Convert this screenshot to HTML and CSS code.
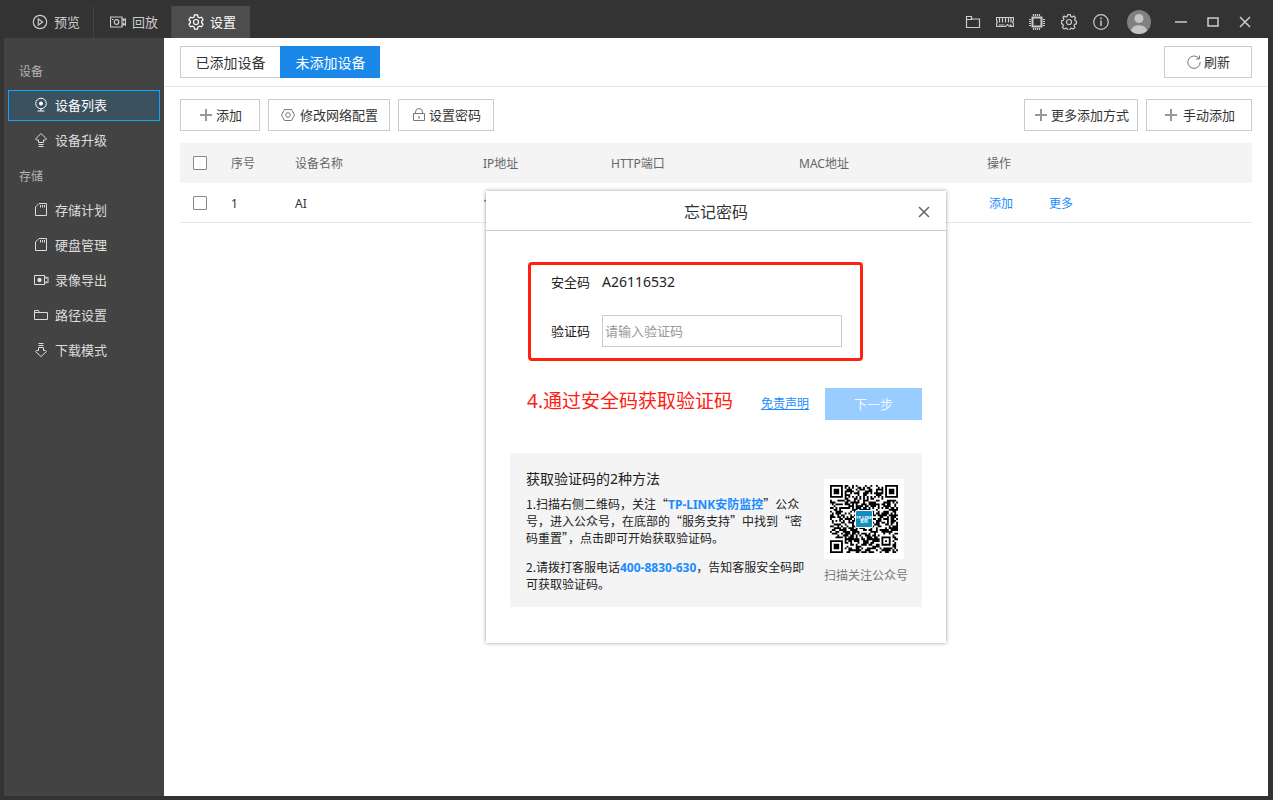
FILE: index.html
```html
<!DOCTYPE html>
<html lang="zh-CN">
  <head>
    <meta charset="UTF-8" />
    <meta name="viewport" content="width=device-width, initial-scale=1.0" />
    <title>设备列表</title>
    <link rel="stylesheet" href="styles.css">
  </head>
  <body>
    <header class="titlebar">
      <nav class="main-tabs">
        <a class="main-tab" href="#">
          <svg class="icon" viewBox="0 0 16 16"><circle cx="8" cy="8" r="6.7"/><path d="M6.3 5v6l4.3-3z"/></svg>
          预览
        </a>
        <a class="main-tab" href="#">
          <svg class="icon" viewBox="0 0 16 16"><path d="M.5 3h11.500v10H.5zM12 5h1.500v1.500L15.500 5v6l-2-1.500V11H12"/><circle cx="6.500" cy="8" r="2.300"/><path d="M2 5.500h1.500"/></svg>
          回放
        </a>
        <a class="main-tab active" href="#">
          <svg class="icon" viewBox="0 0 16 16"><path d="M6.500.8h3L10 3l1.600.9 2-.7 1.500 2.600-1.500 1.400v1.600l1.500 1.400-1.500 2.600-2-.7-1.600.9-.5 2.200h-3L6 13l-1.600-.9-2 .7L.9 10.200l1.500-1.400V7.200L.9 5.800l1.500-2.600 2 .7L6 3z"/><circle cx="8" cy="8" r="2.500"/></svg>
          设置
        </a>
      </nav>
      <div class="window-tools">
        <button class="tool" aria-label="文件夹"><svg class="icon" viewBox="0 0 16 16"><path d="M1.500 13.500v-11h5V5h8v8.500zM1.500 5.500h6"/></svg></button>
        <button class="tool" aria-label="内存"><svg class="icon memory" viewBox="0 0 18 16"><path d="M.5 3.500h17v3q-1.500 1.500 0 3v3h-4l-2-2-2 2h-9v-3q1.500-1.500 0-3z"/><path d="M3.500 4v4.500M6.500 4v4.500M9.500 4v4.500M12.500 4v4.500M15 4v4.500M2.500 11h6M14 10.500l1.500 1.500"/></svg></button>
        <button class="tool" aria-label="处理器"><svg class="icon" viewBox="0 0 16 16"><path d="M3.500 3.500h9v9h-9z" stroke-width="2"/><path d="M4.500 0v2M6.500 0v2M8.500 0v2M10.500 0v2M4.500 14v2M6.500 14v2M8.500 14v2M10.500 14v2M0 5.500h2M0 7.500h2M0 9.500h2M0 11.500h2M14 5.500h2M14 7.500h2M14 9.500h2M14 11.500h2"/></svg></button>
        <button class="tool" aria-label="设置"><svg class="icon" viewBox="0 0 16 16"><path d="M6.700.6h2.600l.5 1.900 1.300.5 1.700-1 1.800 1.800-1 1.700.5 1.300 1.300.4v2.600l-1.800.5-.6 1.300 1 1.700-1.800 1.800-1.700-1-1.200.5-.5 1.800H6.700l-.5-1.800-1.300-.5-1.700 1-1.800-1.800 1-1.700-.5-1.300-1.300-.5V6.700l1.800-.4.5-1.300-1-1.700L3.200 2l1.700 1 1.300-.5z"/><circle cx="8" cy="8" r="2.500"/></svg></button>
        <button class="tool" aria-label="关于"><svg class="icon" viewBox="0 0 16 16"><circle cx="8" cy="8" r="7.300"/><path d="M8 6.500v5.500M8 3.500v1.700" stroke-width="1.500"/></svg></button>
        <button class="tool avatar" aria-label="用户">
          <svg viewBox="0 0 24 24"><circle cx="12" cy="12" r="12" fill="#808080"/><circle cx="12" cy="8.500" r="4.500" fill="#c4c4c4"/><path d="M3.800 20.700C5 17 8 15.200 12 15.200s7 1.800 8.200 5.500A12 12 0 0 1 3.800 20.700z" fill="#c4c4c4"/></svg>
        </button>
        <button class="tool" aria-label="最小化"><svg class="icon" viewBox="0 0 16 16"><path d="M2 8h12" stroke-width="1.500"/></svg></button>
        <button class="tool" aria-label="最大化"><svg class="icon" viewBox="0 0 16 16"><path d="M3 4h10v8H3z" stroke-width="1.500"/></svg></button>
        <button class="tool" aria-label="关闭窗口"><svg class="icon" viewBox="0 0 16 16"><path d="M3 3l10 10M13 3L3 13" stroke-width="1.500"/></svg></button>
      </div>
    </header>

    <div class="layout">
      <aside class="sidebar">
        <div class="menu-group">
          <h2>设备</h2>
          <a class="menu-item active" href="#">
            <svg class="icon" viewBox="0 0 16 16"><circle cx="8" cy="6.500" r="5.300"/><circle class="solid" cx="8" cy="6.500" r="2"/><path d="M8 12v2M4.500 14h7"/></svg>
            设备列表
          </a>
          <a class="menu-item" href="#">
            <svg class="icon" viewBox="0 0 16 16"><path d="M8 1.500L2.500 7l1 1h2v2.500h5V8h2l1-1zM5.500 12.500h5M5.500 14.500h5"/></svg>
            设备升级
          </a>
        </div>
        <div class="menu-group">
          <h2>存储</h2>
          <a class="menu-item" href="#">
            <svg class="icon" viewBox="0 0 16 16"><path d="M6 1.500h7.500v12h-11V5zM7.500 3v2.500M9.500 3v2.500M11.500 3v2.500"/></svg>
            存储计划
          </a>
          <a class="menu-item" href="#">
            <svg class="icon" viewBox="0 0 16 16"><path d="M6 1.500h7.500v12h-11V5zM7.500 3v2.500M9.500 3v2.500M11.500 3v2.500"/></svg>
            硬盘管理
          </a>
          <a class="menu-item" href="#">
            <svg class="icon" viewBox="0 0 16 16"><path d="M1.500 3.500h10v9h-10zM12 5h1v1.500L15 5v6l-2-1.500V11h-1"/><circle class="solid" cx="6.500" cy="8" r="2.200"/></svg>
            录像导出
          </a>
          <a class="menu-item" href="#">
            <svg class="icon" viewBox="0 0 16 16"><path d="M1.500 12.500v-9h4l1 2h8v7zM1.500 5.500h6"/></svg>
            路径设置
          </a>
          <a class="menu-item" href="#">
            <svg class="icon" viewBox="0 0 16 16"><path d="M5.500 1.500h5M5.500 3.500h5M5.500 5.500h5v3h2l1 1L8 14.500l-5.500-5 1-1h2z"/></svg>
            下载模式
          </a>
        </div>
      </aside>

      <main class="content">
        <div class="view-bar">
          <div class="view-tabs">
            <button class="view-tab">已添加设备</button>
            <button class="view-tab active">未添加设备</button>
          </div>
          <button class="btn refresh">
            <svg class="icon" viewBox="0 0 16 16"><path d="M13 4.500A6.200 6.200 0 1 0 14.200 8M13.500 1.500v3.500H10"/></svg>刷新
          </button>
        </div>

        <div class="toolbar">
          <button class="btn add"><svg class="icon" viewBox="0 0 16 16"><path class="plus" d="M8 2v12M2 8h12"/></svg>添加</button>
          <button class="btn network"><svg class="icon" viewBox="0 0 16 16"><path d="M4.500 2.500h7L14.500 8l-3 5.500h-7L1.500 8z"/><circle cx="8" cy="8" r="2.300"/></svg>修改网络配置</button>
          <button class="btn password"><svg class="icon" viewBox="0 0 16 16"><path d="M2.500 6.500h11v7h-11zM4.500 6.500V5a3.500 3.500 0 0 1 7 0v1.500M8 9v3"/></svg>设置密码</button>
          <button class="btn more"><svg class="icon" viewBox="0 0 16 16"><path class="plus" d="M8 2v12M2 8h12"/></svg>更多添加方式</button>
          <button class="btn manual"><svg class="icon" viewBox="0 0 16 16"><path class="plus" d="M8 2v12M2 8h12"/></svg>手动添加</button>
        </div>

        <table class="devices">
          <thead>
            <tr>
              <th class="col-check"><input type="checkbox" aria-label="全选"></th>
              <th class="col-index">序号</th>
              <th class="col-wide">设备名称</th>
              <th class="col-ip">IP地址</th>
              <th class="col-wide">HTTP端口</th>
              <th class="col-wide">MAC地址</th>
              <th>操作</th>
            </tr>
          </thead>
          <tbody>
            <tr>
              <td class="col-check"><input type="checkbox" aria-label="选择 AI"></td>
              <td>1</td>
              <td>AI</td>
              <td>1</td>
              <td></td>
              <td></td>
              <td><div class="row-links"><a href="#">添加</a><a href="#">更多</a></div></td>
            </tr>
          </tbody>
        </table>

        <div class="overlay">
          <section class="dialog" role="dialog" aria-labelledby="dialogTitle">
            <header class="dialog-header">
              <h1 id="dialogTitle">忘记密码</h1>
              <button class="dialog-close" aria-label="关闭"><svg class="icon" viewBox="0 0 16 16"><path d="M3 3l10 10M13 3L3 13" stroke-width="1.500"/></svg></button>
            </header>
            <form class="dialog-body">
              <div class="codes">
                <span>安全码</span>
                <output>A26116532</output>
                <label for="verifyCode">验证码</label>
                <input type="text" id="verifyCode" placeholder="请输入验证码">
              </div>
              <div class="actions">
                <p class="step">4.通过安全码获取验证码</p>
                <a class="disclaimer" href="#">免责声明</a>
                <button type="button" class="next">下一步</button>
              </div>
              <div class="help">
                <div class="help-text">
                  <h3>获取验证码的2种方法</h3>
                  <p>1.扫描右侧二维码，关注“<b>TP-LINK安防监控</b>”公众号，进入公众号，在底部的“服务支持”中找到“密码重置”，点击即可开始获取验证码。</p>
                  <p>2.请拨打客服电话<b>400-8830-630</b>，告知客服安全码即可获取验证码。</p>
                </div>
                <div class="help-qr">
                  <svg class="qr" viewBox="0 0 80 80">
                    <path id="qrModules" fill="#000"/>
                    <rect x="31" y="31" width="18" height="18" rx="2" fill="#fff"/>
                    <rect x="32" y="32" width="16" height="16" rx="1" fill="#0f8fc0"/>
                    <text class="qr-brand" x="40" y="40">TP-LINK</text>
                    <text class="qr-brand" x="40" y="44">安防</text>
                  </svg>
                  <span>扫描关注公众号</span>
                </div>
              </div>
            </form>
          </section>
        </div>
      </main>
    </div>

    <script src="script.js"></script>
  </body>
</html>
```
FILE: script.js
```js
const SIZE = 37;
const STEP = 68 / SIZE;
const MARGIN = 6;

// Square ring pattern used by the finder and alignment marks
function ring(x, y, cx, cy, radius) {
  const d = Math.max(Math.abs(x - cx), Math.abs(y - cy));
  if (d > radius + 1) return null;
  return radius === 3 ? d === 3 || d <= 1 : d === 2 || d === 0;
}

function isDark(x, y, random) {
  const marks = [
    [3, 3, 3],
    [SIZE - 4, 3, 3],
    [3, SIZE - 4, 3],
    [SIZE - 7, SIZE - 7, 2],
  ];
  for (const [cx, cy, radius] of marks) {
    const mark = ring(x, y, cx, cy, radius);
    if (mark !== null) return mark;
  }
  if (x === 6 || y === 6) return (x + y) % 2 === 0;
  return random > 0.47;
}

let seed = 2611;
let path = "";
for (let y = 0; y < SIZE; y++) {
  for (let x = 0; x < SIZE; x++) {
    seed = (seed * 16807) % 2147483647;
    if (isDark(x, y, seed / 2147483647)) {
      path += `M${MARGIN + x * STEP} ${MARGIN + y * STEP}h${STEP}v${STEP}h-${STEP}z`;
    }
  }
}
document.getElementById("qrModules").setAttribute("d", path);
```
FILE: styles.css
```css
* {
  box-sizing: border-box;
}

body {
  margin: 0;
  min-height: 100vh;
  display: flex;
  flex-direction: column;
  padding: 0 5px 4px 4px;
  background: #333;
  color: #333;
  font-family: "Noto Sans", "Noto Sans CJK SC", sans-serif;
  font-size: 13px;
  line-height: 20px;
}

h1,
h2,
h3,
p {
  margin: 0;
  font-weight: normal;
}

a {
  color: #1a8cff;
  text-decoration: none;
}

button,
input {
  font: inherit;
  color: inherit;
}

button {
  padding: 0;
  border: none;
  background: none;
  cursor: pointer;
}

.icon {
  width: 16px;
  height: 16px;
  flex: none;
  fill: none;
  stroke: currentColor;
}

.icon .solid {
  fill: currentColor;
  stroke: none;
}

/* Title bar */
.titlebar {
  display: flex;
  justify-content: space-between;
  height: 38px;
  padding: 6px 7px 0 12px;
  color: #ccc;
}

.titlebar .icon {
  stroke-width: 1.2;
}

.main-tabs,
.window-tools {
  display: flex;
}

.main-tab {
  display: flex;
  align-items: center;
  gap: 6px;
  padding: 0 13px 0 16px;
  border-right: 1px solid #444;
  color: #ccc;
}

.main-tab.active {
  background: #4d4d4d;
  border-color: #4d4d4d;
  color: #fff;
}

.tool {
  display: flex;
  align-items: center;
  justify-content: center;
  width: 32px;
}

.tool .memory {
  width: 18px;
}

.avatar {
  width: 44px;
  margin-right: 4px;
}

.avatar svg {
  width: 24px;
  height: 24px;
}

/* Sidebar */
.layout {
  flex: 1;
  display: flex;
}

.sidebar {
  width: 160px;
  display: flex;
  flex-direction: column;
  gap: 7px;
  padding: 20px 4px;
  background: #434343;
}

.menu-group {
  display: flex;
  flex-direction: column;
  gap: 4px;
}

.menu-group h2 {
  padding-left: 11px;
  font-size: 12px;
  line-height: 28px;
  color: #b4b4b4;
}

.menu-item {
  display: flex;
  align-items: center;
  gap: 6px;
  height: 31px;
  padding: 0 0 1px 24px;
  border: 1px solid transparent;
  color: #ddd;
}

.menu-item.active {
  background: #3b515e;
  border-color: #0fa5ff;
  color: #fff;
}

/* Content */
.content {
  flex: 1;
  position: relative;
  background: #fff;
}

.view-bar {
  display: flex;
  justify-content: space-between;
  padding: 8px 16px;
  border-bottom: 1px solid #e6e6e6;
}

.view-tabs {
  display: flex;
}

.view-tab {
  width: 100px;
  height: 32px;
  padding-top: 1px;
  border: 1px solid #ccc;
  border-right: none;
  font-size: 14px;
}

.view-tab.active {
  background: #1a88e8;
  border-color: #1a88e8;
  color: #fff;
}

.btn {
  display: flex;
  align-items: center;
  justify-content: center;
  gap: 2px;
  height: 32px;
  border: 1px solid #ccc;
  background: #fff;
}

.btn .icon {
  color: #777;
}

.btn .plus {
  stroke: #999;
  stroke-width: 2;
}

.toolbar {
  display: flex;
  gap: 8px;
  padding: 12px 16px;
}

.refresh {
  width: 88px;
}

.add {
  width: 80px;
}

.network {
  width: 122px;
  gap: 4px;
}

.password {
  width: 96px;
}

.more {
  width: 114px;
  margin-left: auto;
}

.manual {
  width: 106px;
  gap: 4px;
}

.devices {
  width: calc(100% - 32px);
  margin: 0 16px;
  border-spacing: 0;
  table-layout: fixed;
  font-size: 12px;
}

.devices th,
.devices td {
  height: 40px;
  padding: 2px 8px 0;
  text-align: left;
  font-weight: normal;
}

.devices th {
  background: #f4f4f4;
  color: #666;
}

.devices td {
  border-bottom: 1px solid #e6e6e6;
}

.devices .col-check {
  width: 43px;
  padding-top: 0;
}

.devices .col-index {
  width: 64px;
}

.devices .col-wide {
  width: 188px;
}

.devices .col-ip {
  width: 128px;
}

.devices input {
  appearance: none;
  display: block;
  width: 14px;
  height: 14px;
  margin: 0 5px;
  border: 1px solid #888;
  border-radius: 1px;
  background: #fff;
}

.row-links {
  display: flex;
  gap: 36px;
  padding-left: 2px;
}

/* Dialog */
.overlay {
  position: absolute;
  inset: 0;
  display: flex;
  align-items: center;
  justify-content: center;
}

.dialog {
  width: 460px;
  background: #fff;
  box-shadow: 0 0 4px rgba(0, 0, 0, 0.4);
}

.dialog-header {
  display: grid;
  grid-template-columns: 44px 1fr 44px;
  height: 40px;
  border-bottom: 1px solid #ccc;
}

.dialog-header h1 {
  grid-column: 2;
  font-size: 16px;
  line-height: 42px;
  text-align: center;
}

.dialog-close {
  display: flex;
  align-items: center;
  justify-content: center;
  color: #666;
}

.dialog-body {
  padding: 31px 24px 36px;
}

.codes {
  display: grid;
  grid-template-columns: auto 240px;
  align-items: center;
  gap: 23px 12px;
  width: fit-content;
  margin-left: 18px;
  padding: 7px 18px 11px 20px;
  border: 3px solid #ff2010;
  border-radius: 4px;
  color: #222;
}

.codes output {
  font-size: 14px;
}

.codes input {
  height: 32px;
  padding: 0 2px;
  border: 1px solid #ccc;
}

.codes input::placeholder {
  color: #999;
}

.actions {
  display: flex;
  justify-content: flex-end;
  margin: 27px 0 33px;
}

.step {
  margin-right: 28px;
  font-size: 19px;
  line-height: 26px;
  color: #ff2010;
}

.disclaimer {
  margin-right: 16px;
  font-size: 12px;
  line-height: 32px;
  text-decoration: underline;
}

.next {
  width: 97px;
  height: 32px;
  background: #99ccff;
  color: #f0f7ff;
}

.help {
  display: flex;
  gap: 16px;
  padding: 16px 14px 15px 16px;
  background: #f4f4f4;
  font-size: 12px;
  line-height: 17px;
  color: #222;
}

.help-text {
  flex: 1;
}

.help h3 {
  margin-bottom: 6px;
  font-size: 14px;
  line-height: 20px;
}

/* CJK font first so the curly quotes are full width */
.help p {
  font-family: "Noto Sans CJK SC", sans-serif;
}

.help p + p {
  margin-top: 12px;
}

.help b {
  font-family: "Noto Sans", "Noto Sans CJK SC", sans-serif;
  line-height: 1;
  color: #1a8cff;
}

.help-qr {
  display: flex;
  flex-direction: column;
  gap: 8px;
  padding-top: 10px;
  color: #777;
}

.qr {
  width: 80px;
  height: 80px;
  background: #fff;
}

.qr-brand {
  font-size: 4px;
  font-weight: bold;
  text-anchor: middle;
  fill: #fff;
}
```
